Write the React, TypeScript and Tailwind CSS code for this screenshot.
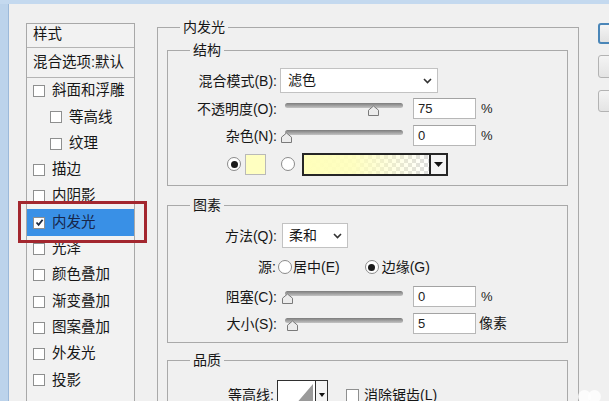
const font = "font-['Liberation_Sans','Noto_Sans_CJK_SC',sans-serif]";

interface StyleItem {
  label: string;
  indent?: boolean;
  checked?: boolean;
}

const styleItems: StyleItem[] = [
  { label: "斜面和浮雕" },
  { label: "等高线", indent: true },
  { label: "纹理", indent: true },
  { label: "描边" },
  { label: "内阴影" },
  { label: "内发光", checked: true },
  { label: "光泽" },
  { label: "颜色叠加" },
  { label: "渐变叠加" },
  { label: "图案叠加" },
  { label: "外发光" },
  { label: "投影" },
];

function CheckBox({ checked }: { checked?: boolean }) {
  return (
    <span className="flex h-[12px] w-[12px] shrink-0 items-center justify-center border border-[#8e8f8f] bg-white">
      {checked && (
        <svg width="9" height="9" viewBox="0 0 9 9">
          <path d="M1.5 4.5 L3.6 6.8 L7.6 1.8" fill="none" stroke="#1d2a3f" strokeWidth="1.8" />
        </svg>
      )}
    </span>
  );
}

function Radio({ on }: { on?: boolean }) {
  return (
    <span className="flex h-[14px] w-[14px] shrink-0 items-center justify-center rounded-full border border-[#8a8a8a] bg-white">
      {on && <span className="h-[7px] w-[7px] rounded-full bg-[#1a1a1a]" />}
    </span>
  );
}

function Chevron() {
  return (
    <svg width="9" height="6" viewBox="0 0 9 6">
      <path d="M1 1 L4.5 4.5 L8 1" fill="none" stroke="#333" strokeWidth="1.6" />
    </svg>
  );
}

function Label({ children }: { children: React.ReactNode }) {
  return <span className="w-[109px] shrink-0 text-right text-[14px] leading-[20px] text-[#161616]">{children}</span>;
}

function Slider({ thumb }: { thumb: string }) {
  return (
    <div className="relative ml-[8px] h-full w-[118px] shrink-0">
      <div className="mt-[5px] h-[5px] rounded-full bg-linear-to-b from-[#7c7c7c] to-[#c4c4c4]" />
      <svg className={`absolute top-[7px] ${thumb}`} width="13" height="11" viewBox="0 0 13 11">
        <path d="M1.5 10.5 V5.2 L6.5 1 L11.5 5.2 V10.5 Z" fill="#ececec" stroke="#7a7a7a" />
      </svg>
    </div>
  );
}

function NumberBox({ value }: { value: string }) {
  return (
    <div className="ml-[10px] flex h-[21px] w-[63px] shrink-0 items-center border border-[#b7b7b7] border-t-[#a3a3a3] bg-white pl-[4px] text-[13px] text-[#222]">
      {value}
    </div>
  );
}

function Group({ title, className, children }: { title: string; className: string; children?: React.ReactNode }) {
  return (
    <fieldset className={`border border-[#a9a9a9] ${className}`}>
      <legend className="ml-[22px] px-[3px] text-[14px] leading-[20px] text-[#161616]">{title}</legend>
      {children}
    </fieldset>
  );
}

function GradientSwatch() {
  return (
    <div className="ml-[7px] flex h-[23px] w-[146px] shrink-0 border-2 border-[#262626]">
      <svg className="h-full flex-1" viewBox="0 0 125 19" preserveAspectRatio="none">
        <defs>
          <pattern id="chk" width="8" height="8" patternUnits="userSpaceOnUse">
            <rect width="8" height="8" fill="#ffffff" />
            <rect width="4" height="4" fill="#dedede" />
            <rect x="4" y="4" width="4" height="4" fill="#dedede" />
          </pattern>
          <linearGradient id="fade" x1="0" x2="1" y1="0" y2="0">
            <stop offset="0" stopColor="#ffffbb" stopOpacity="1" />
            <stop offset="0.4" stopColor="#ffffbb" stopOpacity="0.9" />
            <stop offset="1" stopColor="#ffffbb" stopOpacity="0" />
          </linearGradient>
        </defs>
        <rect width="125" height="19" fill="url(#chk)" />
        <rect width="125" height="19" fill="url(#fade)" />
      </svg>
      <div className="flex w-[17px] items-center justify-center border-l-2 border-[#262626] bg-[#f4f4f4]">
        <svg width="9" height="5" viewBox="0 0 9 5">
          <path d="M0 0 H9 L4.5 5 Z" fill="#111" />
        </svg>
      </div>
    </div>
  );
}

function ContourBox() {
  return (
    <div className="ml-[3px] flex h-[30px] w-[51px] shrink-0 border border-[#2f2f2f] bg-white">
      <svg className="h-full w-[37px]" viewBox="0 0 37 28">
        <path d="M17 24 L35 3 V28 H12 Z" fill="#9a9a9a" />
      </svg>
      <div className="flex flex-1 items-center justify-center border-l border-[#2f2f2f] bg-[#f4f4f4]">
        <svg width="6" height="4" viewBox="0 0 6 4">
          <path d="M0 0 H6 L3 4 Z" fill="#111" />
        </svg>
      </div>
    </div>
  );
}

export default function App() {
  return (
    <div className={`relative flex h-[401px] w-[609px] flex-col overflow-hidden bg-[#f0f0f0] ${font}`}>
      <div className="h-[4px] shrink-0 bg-[#c4d9ef]" />
      <div className="flex flex-1">
        <div className="w-[9px] shrink-0 border-r border-[#9cb9d9] bg-[#bcd3eb]" />

        <div className="flex items-start pl-[17px]">
          {/* style list */}
          <div className="mt-[19px] h-[400px] w-[109px] shrink-0 border border-[#a8a8a8] bg-[#f2f2f2] text-[14.5px] text-[#161616]">
            <div className="h-[24px] border-b border-[#b4b4b4] pl-[6px] pt-[1px] leading-[18px]">样式</div>
            <div className="flex h-[30px] items-center border-b border-[#b4b4b4] pl-[6px]">混合选项:默认</div>
            {styleItems.map((item) => (
              <div
                key={item.label}
                className={`flex h-[26.3px] items-center gap-[7px] ${item.indent ? "pl-[23px]" : "pl-[6px]"} ${
                  item.checked ? "bg-[#3990e6] text-[#17264a]" : ""
                }`}
              >
                <CheckBox checked={item.checked} />
                <span>{item.label}</span>
              </div>
            ))}
          </div>

          {/* settings */}
          <Group title="内发光" className="ml-[22px] mt-[13px] h-[440px] w-[422px] shrink-0">
            <Group title="结构" className="ml-[9px] mt-[3px] w-[401px] pb-[10px]">
              <div className="mt-[8px] flex h-[25px] items-center">
                <Label>混合模式(B):</Label>
                <div className="ml-[3px] flex h-[25px] w-[158px] items-center justify-between border border-[#c2c2c2] bg-white pl-[7px] pr-[5px] text-[14px] text-[#161616]">
                  <span>滤色</span>
                  <Chevron />
                </div>
              </div>
              <div className="mt-[5px] flex h-[21px] items-center">
                <Label>不透明度(O):</Label>
                <Slider thumb="left-[82px]" />
                <NumberBox value="75" />
                <span className="ml-[5px] text-[13px] text-[#222]">%</span>
              </div>
              <div className="mt-[6px] flex h-[21px] items-center">
                <Label>杂色(N):</Label>
                <Slider thumb="left-[-5px]" />
                <NumberBox value="0" />
                <span className="ml-[5px] text-[13px] text-[#222]">%</span>
              </div>
              <div className="mt-[7px] flex h-[22px] items-center">
                <span className="ml-[59px]">
                  <Radio on />
                </span>
                <div className="ml-[4px] h-[21px] w-[21px] shrink-0 border border-[#b9b9b9] bg-[#ffffc1]" />
                <span className="ml-[15px]">
                  <Radio />
                </span>
                <GradientSwatch />
              </div>
            </Group>

            <Group title="图素" className="ml-[9px] mt-[9px] w-[401px] pb-[8px]">
              <div className="mt-[8px] flex h-[25px] items-center">
                <Label>方法(Q):</Label>
                <div className="ml-[5px] flex h-[25px] w-[66px] items-center justify-between border border-[#c2c2c2] bg-white pl-[6px] pr-[5px] text-[14px] text-[#161616]">
                  <span>柔和</span>
                  <Chevron />
                </div>
              </div>
              <div className="mt-[9px] flex h-[20px] items-center text-[14px] text-[#161616]">
                <span className="w-[108px] shrink-0 text-right">源:</span>
                <span className="ml-[2px]">
                  <Radio />
                </span>
                <span className="ml-[1px]">居中(E)</span>
                <span className="ml-[25px]">
                  <Radio on />
                </span>
                <span className="ml-[3px]">边缘(G)</span>
              </div>
              <div className="mt-[9px] flex h-[21px] items-center">
                <Label>阻塞(C):</Label>
                <Slider thumb="left-[-4px]" />
                <NumberBox value="0" />
                <span className="ml-[5px] text-[13px] text-[#222]">%</span>
              </div>
              <div className="mt-[6px] flex h-[21px] items-center">
                <Label>大小(S):</Label>
                <Slider thumb="left-[1px]" />
                <NumberBox value="5" />
                <span className="ml-[3px] text-[14px] text-[#161616]">像素</span>
              </div>
            </Group>

            <Group title="品质" className="ml-[9px] mt-[7px] h-[80px] w-[401px]">
              <div className="mt-[8px] flex h-[34px] items-center">
                <span className="w-[106px] shrink-0 text-right text-[14px] text-[#161616]">等高线:</span>
                <ContourBox />
                <span className="ml-[18px]">
                  <span className="block h-[13px] w-[13px] border border-[#8e8f8f] bg-white" />
                </span>
                <span className="ml-[5px] text-[14px] text-[#161616]">消除锯齿(L)</span>
              </div>
            </Group>
          </Group>

          {/* dialog buttons */}
          <div className="ml-[19px] mt-[19px] flex w-[80px] shrink-0 flex-col">
            <div className="h-[21px] rounded-[3px] border-2 border-[#4a86b8] bg-linear-to-b from-[#f4f4f4] to-[#e2e2e2]" />
            <div className="mt-[11px] h-[23px] rounded-[3px] border border-[#b3b3b3] bg-linear-to-b from-[#f4f4f4] to-[#e4e4e4]" />
            <div className="mt-[12px] h-[22px] rounded-[3px] border border-[#b3b3b3] bg-linear-to-b from-[#f4f4f4] to-[#e4e4e4]" />
          </div>
        </div>
      </div>

      {/* annotation around the selected style */}
      <div className="absolute left-[18px] top-[201px] h-[42px] w-[129px] border-[3px] border-[#a3272f]" />

      {/* watermark dots */}
      <div className="absolute left-[578px] top-[390px] h-[13px] w-[13px] rounded-full bg-white/80" />
      <div className="absolute left-[588px] top-[390px] h-[13px] w-[13px] rounded-full bg-white/80" />
    </div>
  );
}
